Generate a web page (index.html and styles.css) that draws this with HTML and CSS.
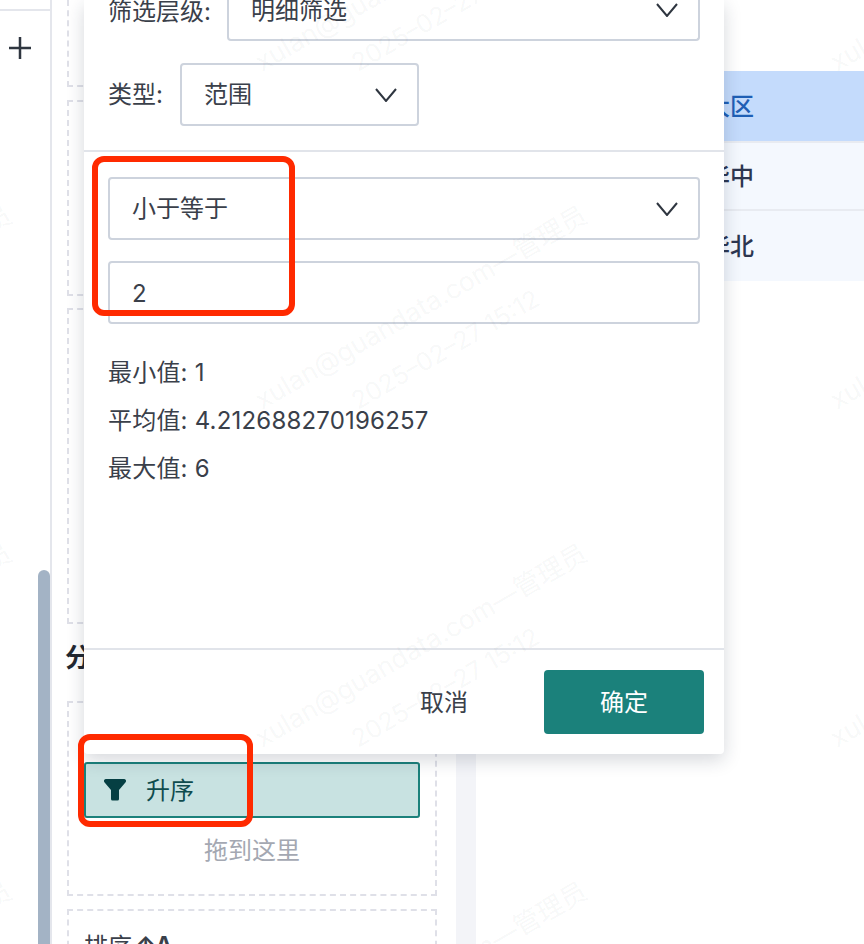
FILE: index.html
```html
<!DOCTYPE html>
<html lang="zh-CN">
<head>
<meta charset="utf-8">
<title>筛选</title>
<link rel="stylesheet" href="styles.css">
</head>
<body>
<div class="page">
  <aside class="rail">
    <div class="rail-line"></div>
    <svg class="plus" viewBox="0 0 24 24"><path d="M12 1v22M1 12h22"/></svg>
    <div class="scrollbar"></div>
  </aside>
  <section class="panel">
    <div class="drop drop-a"></div>
    <div class="drop drop-b"></div>
    <div class="drop drop-c"></div>
    <h2 class="panel-title">分组</h2>
    <div class="drop drop-d">
      <div class="chip">
        <svg class="funnel" viewBox="0 0 22 22"><path d="M2 0h18a2 2 0 0 1 1.600 3.200L15 11v9a1.500 1.500 0 0 1-1.500 1.500h-5A1.500 1.500 0 0 1 7 20v-9L.4 3.200A2 2 0 0 1 2 0z"/></svg>
        <span>升序</span>
      </div>
      <div class="hint">拖到这里</div>
    </div>
    <div class="drop drop-e"><span class="sort">排序 <b>↑A</b></span></div>
  </section>
  <div class="gutter"></div>
  <main class="content">
    <div class="row row-active"><span>大区</span></div>
    <div class="row row-short"><span>华中</span></div>
    <div class="row row-last"><span>华北</span></div>
  </main>

  <div class="modal">
    <div class="modal-head">
      <div class="field field-clipped">
        <span class="label label-wide">筛选层级:</span>
        <div class="select select-clipped"><span>明细筛选</span><svg class="chev" viewBox="0 0 22 14"><path d="M1 1l10 12L21 1"/></svg></div>
      </div>
      <div class="field field-type">
        <span class="label label-narrow">类型:</span>
        <div class="select select-type"><span>范围</span><svg class="chev" viewBox="0 0 22 14"><path d="M1 1l10 12L21 1"/></svg></div>
      </div>
    </div>
    <div class="modal-body">
      <div class="select"><span>小于等于</span><svg class="chev" viewBox="0 0 22 14"><path d="M1 1l10 12L21 1"/></svg></div>
      <div class="select value-input"><span>2</span></div>
      <div class="stats">
        <p>最小值: 1</p>
        <p>平均值: 4.212688270196257</p>
        <p>最大值: 6</p>
      </div>
    </div>
    <div class="modal-foot">
      <div class="btn btn-ghost">取消</div>
      <div class="btn btn-primary">确定</div>
    </div>
  </div>

  <svg class="watermark" viewBox="0 0 864 944">
    <g class="wm-name">
      <text transform="translate(-313 410) rotate(-30)">xulan@guandata.com—管理员</text>
      <text transform="translate(-313 748) rotate(-30)">xulan@guandata.com—管理员</text>
      <text transform="translate(-313 1086) rotate(-30)">xulan@guandata.com—管理员</text>
      <text transform="translate(262 72) rotate(-30)">xulan@guandata.com—管理员</text>
      <text transform="translate(262 410) rotate(-30)">xulan@guandata.com—管理员</text>
      <text transform="translate(262 748) rotate(-30)">xulan@guandata.com—管理员</text>
      <text transform="translate(262 1086) rotate(-30)">xulan@guandata.com—管理员</text>
      <text transform="translate(837 72) rotate(-30)">xulan@guandata.com—管理员</text>
      <text transform="translate(837 410) rotate(-30)">xulan@guandata.com—管理员</text>
      <text transform="translate(837 748) rotate(-30)">xulan@guandata.com—管理员</text>
    </g>
    <g class="wm-date">
      <text transform="translate(358 72) rotate(-30)">2025–02–27 15:12</text>
      <text transform="translate(358 410) rotate(-30)">2025–02–27 15:12</text>
      <text transform="translate(358 748) rotate(-30)">2025–02–27 15:12</text>
    </g>
  </svg>

  <div class="mark mark-fields"></div>
  <div class="mark mark-chip"></div>
</div>
</body>
</html>
```
FILE: styles.css
```css
* { box-sizing: border-box; }
html, body { margin: 0; padding: 0; background: #fff; }
body {
  font-family: Inter, "Noto Sans CJK SC", sans-serif;
  font-size: 24px;
  color: #3a404a;
}
.page {
  position: relative;
  display: flex;
  width: 864px;
  height: 944px;
  overflow: hidden;
  background: #fff;
}

/* left rail */
.rail {
  position: relative;
  flex: 0 0 52px;
  border-right: 2px solid #e4e6ec;
}
.rail-line { height: 2px; margin-top: 9px; background: #e4e6ec; }
.plus { display: block; width: 24px; height: 24px; margin: 25px 0 0 8px; }
.plus path { fill: none; stroke: #2f3640; stroke-width: 2.5; }
.scrollbar {
  position: absolute;
  right: 0;
  bottom: 0;
  width: 12px;
  height: 374px;
  border-radius: 6px 6px 0 0;
  background: #a3b3c5;
}

/* field panel */
.panel {
  flex: 0 0 404px;
  display: flex;
  flex-direction: column;
  padding-left: 15px;
}
.drop {
  flex: none;
  width: 370px;
  border: 2px dashed #dfe0e8;
}
.drop-a { height: 87px; border-top: 0; }
.drop-b { height: 196px; margin-top: 13px; }
.drop-c { height: 316px; margin-top: 12px; }
.panel-title {
  flex: none;
  margin: 17px 0 0 -2px;
  height: 60px;
  font-size: 26px;
  line-height: 34px;
  font-weight: 700;
  color: #222831;
}
.drop-d { height: 195px; padding: 59px 15px 0; }
.chip {
  display: flex;
  align-items: center;
  height: 56px;
  width: 336px;
  padding-left: 18px;
  border: 2px solid #1b817b;
  border-radius: 3px;
  background: #c8e2e1;
  color: #0f4c4e;
}
.chip span { margin-top: -3px; }
.funnel { width: 22px; height: 22px; margin-right: 20px; fill: #053f43; }
.hint { margin-top: 15px; text-align: center; line-height: 36px; color: #a4a8b2; }
.drop-e { height: 80px; margin-top: 13px; padding: 18px 15px 0; }
.sort { color: #3a404a; line-height: 36px; }
.sort b { margin-left: -3px; font-size: 22px; position: relative; top: -3px; }

/* gutter + content */
.gutter { flex: 0 0 20px; background: #f3f4f8; }
.content { flex: 1; padding-top: 71px; }
.row {
  height: 72px;
  padding-left: 230px;
  display: flex;
  align-items: center;
  background: #f4f8fe;
  border-bottom: 2px solid #e8ebf1;
  font-weight: 500;
  color: #2d3650;
}
.row span { margin-top: -4px; }
.row-active { background: #c4dbfc; color: #1f5fb5; }
.row-short { height: 68px; }
.row-last { height: 70px; border-bottom: 0; }

/* modal */
.modal {
  position: absolute;
  left: 84px;
  top: 0;
  width: 640px;
  height: 754px;
  display: flex;
  flex-direction: column;
  border-radius: 0 0 4px 4px;
  background: #fff;
  box-shadow: 0 6px 18px rgba(30, 40, 60, .18);
}
.modal-head { flex: 0 0 152px; border-bottom: 2px solid #e1e4ea; padding: 0 24px; }
.field { display: flex; align-items: center; }
.field-type { margin-top: 22px; }
.label { flex: none; }
.label-wide { width: 119px; margin-top: -23px; }
.label-narrow { width: 72px; margin-top: -4px; }
.select {
  position: relative;
  flex: 1;
  display: flex;
  align-items: center;
  justify-content: space-between;
  height: 63px;
  padding: 0 20px 4px 22px;
  border: 2px solid #cdd3dd;
  border-radius: 4px;
  background: #fff;
}
.select .chev { margin-top: 4px; }
.select-clipped {
  height: 41px;
  align-items: flex-start;
  border-top: 0;
  border-radius: 0 0 4px 4px;
  overflow: hidden;
}
.select-clipped span { margin-top: -9px; }
.select-clipped .chev { margin-top: 3px; }
.select-type { flex: 0 0 239px; }
.chev { flex: none; width: 22px; height: 14px; }
.chev path { fill: none; stroke: #2f3640; stroke-width: 2; }
.modal-body { flex: 1; padding: 25px 24px 0; }
.value-input { margin-top: 21px; padding-top: 2px; padding-bottom: 0; }
.stats { margin-top: 25px; }
.stats p { margin: 0; line-height: 48px; letter-spacing: .2px; }
.modal-foot {
  flex: 0 0 106px;
  display: flex;
  justify-content: flex-end;
  gap: 20px;
  padding: 20px 20px 0;
  border-top: 2px solid #e1e4ea;
}
.btn {
  width: 160px;
  height: 64px;
  padding-bottom: 4px;
  display: flex;
  align-items: center;
  justify-content: center;
  border-radius: 4px;
}
.btn-primary { background: #1b817b; color: #fff; }

/* overlays */
.watermark {
  position: absolute;
  inset: 0;
  width: 864px;
  height: 944px;
  pointer-events: none;
}
.watermark text { font-size: 26.5px; fill: rgba(60, 70, 90, .05); }
.watermark .wm-date text { font-size: 25px; }
.mark {
  position: absolute;
  border: 6px solid #ff2a00;
  border-radius: 12px;
  pointer-events: none;
}
.mark-fields { left: 92px; top: 156px; width: 203px; height: 160px; }
.mark-chip { left: 78px; top: 734px; width: 175px; height: 93px; }
```
